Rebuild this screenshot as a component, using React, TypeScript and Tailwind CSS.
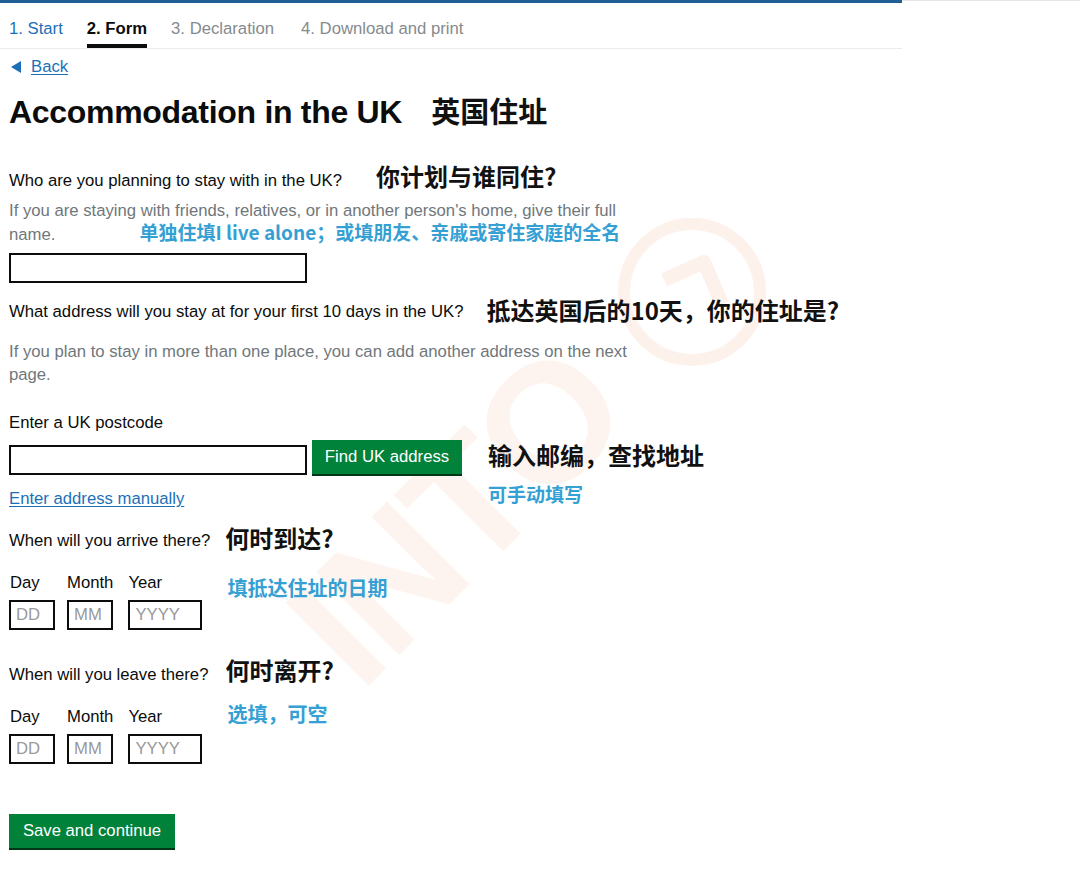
import React from "react";

const cjk = { fontFamily: '"Noto Sans CJK SC", sans-serif' };

function Note({ children, size = "text-[24px]", lift = "" }: { children: React.ReactNode; size?: string; lift?: string }) {
  return (
    <span style={cjk} className={`relative ${lift} ${size} font-bold leading-none text-[#111111] whitespace-nowrap`}>
      {children}
    </span>
  );
}

function Tip({ children, size = "text-[20px]" }: { children: React.ReactNode; size?: string }) {
  return (
    <span style={cjk} className={`${size} font-bold leading-none text-[#35a0d3] whitespace-nowrap`}>
      {children}
    </span>
  );
}

function DateFields() {
  return (
    <div className="flex">
      <div className="flex flex-col mr-[12px]">
        <span className="leading-6 pl-px">Day</span>
        <input
          placeholder="DD"
          className="mt-[5px] w-[46px] h-[30px] border-2 border-[#0b0c0c] px-[5px] text-[16.7px] bg-transparent placeholder:text-[#9a9a9a] outline-none"
        />
      </div>
      <div className="flex flex-col mr-[15px]">
        <span className="leading-6">Month</span>
        <input
          placeholder="MM"
          className="mt-[5px] w-[46px] h-[30px] border-2 border-[#0b0c0c] px-[5px] text-[16.7px] bg-transparent placeholder:text-[#9a9a9a] outline-none"
        />
      </div>
      <div className="flex flex-col">
        <span className="leading-6">Year</span>
        <input
          placeholder="YYYY"
          className="mt-[5px] w-[74px] h-[30px] border-2 border-[#0b0c0c] px-[5px] text-[16.7px] bg-transparent placeholder:text-[#9a9a9a] outline-none"
        />
      </div>
    </div>
  );
}

export default function App() {
  return (
    <div
      className="relative w-[1080px] h-[876px] bg-white overflow-hidden text-[16.7px] text-[#0b0c0c]"
      style={{ fontFamily: '"Liberation Sans", Arial, sans-serif' }}
    >
      {/* watermark */}
      <div className="absolute inset-0 pointer-events-none">
        <span className="absolute left-[262px] top-[430px] -rotate-45 origin-center text-[170px] font-bold leading-none text-[#fef4ef] tracking-[-4px]">
          INTO
        </span>
        <svg className="absolute left-[612px] top-[212px]" width="160" height="160" viewBox="0 0 160 160">
          <circle cx="80" cy="80" r="68" fill="none" stroke="#fdf1eb" strokeWidth="12" />
          <path d="M52 68 L92 50 L110 92" fill="none" stroke="#fdf1eb" strokeWidth="14" strokeLinejoin="round" />
        </svg>
      </div>

      <div className="relative w-[902px]">
        {/* progress tabs */}
        <div className="h-[3px] bg-[#1f5f96]" />
        <div className="flex border-b border-[#ebebeb] pl-[9px]">
          <span className="pt-4 pb-[5px] border-b-4 border-transparent leading-5 text-[#1d70b8] mr-[24px]">1. Start</span>
          <span className="pt-4 pb-[5px] border-b-4 border-[#0b0c0c] leading-5 font-bold mr-[24px]">2. Form</span>
          <span className="pt-4 pb-[5px] border-b-4 border-transparent leading-5 text-[#858a8d] mr-[27px]">3. Declaration</span>
          <span className="pt-4 pb-[5px] border-b-4 border-transparent leading-5 text-[#858a8d]">4. Download and print</span>
        </div>

        <div className="pl-[9px]">
          {/* back */}
          <a className="mt-[8px] flex items-center gap-[10px] leading-5 text-[#1d70b8]">
            <svg width="10" height="12" viewBox="0 0 10 12" className="ml-[2px]">
              <path d="M0 6 L10 0 L10 12 Z" fill="#1d70b8" />
            </svg>
            <span className="underline underline-offset-2">Back</span>
          </a>

          {/* heading */}
          <div className="mt-[15px] flex items-center gap-[29px]">
            <h1 className="text-[32px] font-bold leading-10 tracking-[-0.3px]">Accommodation in the UK</h1>
            <Note size="text-[29px]" lift="-top-[2px]">英国住址</Note>
          </div>

          {/* who */}
          <div className="mt-[37px] flex items-center gap-[34px]">
            <span className="leading-6">Who are you planning to stay with in the UK?</span>
            <Note lift="-top-[5px]">你计划与谁同住?</Note>
          </div>
          <div className="mt-[6px] text-[#6f777b] leading-[23px]">
            <div>If you are staying with friends, relatives, or in another person's home, give their full</div>
            <div className="flex items-center">
              <span>name.</span>
              <span className="ml-[84px]">
                <Tip size="text-[19px]">单独住填I live alone；或填朋友、亲戚或寄住家庭的全名</Tip>
              </span>
            </div>
          </div>
          <input className="mt-[7px] block w-[298px] h-[30px] border-2 border-[#0b0c0c] bg-transparent outline-none" />

          {/* address */}
          <div className="mt-[17px] flex items-center gap-[23px]">
            <span className="leading-6">What address will you stay at for your first 10 days in the UK?</span>
            <Note lift="-top-[2px]">抵达英国后的10天，你的住址是?</Note>
          </div>
          <div className="mt-[16px] text-[#6f777b] leading-[23px]">
            <div>If you plan to stay in more than one place, you can add another address on the next</div>
            <div>page.</div>
          </div>

          <div className="mt-[25px] leading-6">Enter a UK postcode</div>
          <div className="mt-[5px] flex gap-[26px]">
            <div className="flex flex-col">
              <div className="flex items-start gap-[5px]">
                <input className="mt-[5px] w-[298px] h-[30px] border-2 border-[#0b0c0c] bg-transparent outline-none" />
                <button className="h-[34px] w-[150px] bg-[#00823b] text-white leading-5 shadow-[0_2px_0_#003618]">
                  Find UK address
                </button>
              </div>
              <a className="mt-[12px] leading-6 text-[#1d70b8] underline underline-offset-2">Enter address manually</a>
            </div>
            <div className="flex flex-col pt-[3px]">
              <Note>输入邮编，查找地址</Note>
              <span className="mt-[17px]">
                <Tip size="text-[19px]">可手动填写</Tip>
              </span>
            </div>
          </div>

          {/* arrive */}
          <div className="mt-[18px] flex items-center gap-[15px]">
            <span className="leading-6">When will you arrive there?</span>
            <Note lift="-top-[3px]">何时到达?</Note>
          </div>
          <div className="mt-[18px] flex items-start gap-[25px]">
            <DateFields />
            <span className="mt-[7px]">
              <Tip>填抵达住址的日期</Tip>
            </span>
          </div>

          {/* leave */}
          <div className="mt-[33px] flex items-center gap-[17px]">
            <span className="leading-6">When will you leave there?</span>
            <Note lift="-top-[5px]">何时离开?</Note>
          </div>
          <div className="mt-[18px] flex items-start gap-[25px]">
            <DateFields />
            <span className="-mt-[1px]">
              <Tip>选填，可空</Tip>
            </span>
          </div>

          <button className="mt-[50px] h-[34px] w-[166px] bg-[#00823b] text-white leading-5 shadow-[0_2px_0_#003618]">
            Save and continue
          </button>
        </div>
      </div>
      <div className="absolute left-[902px] top-0 right-0 h-px bg-[#e6e6e6]" />
    </div>
  );
}
